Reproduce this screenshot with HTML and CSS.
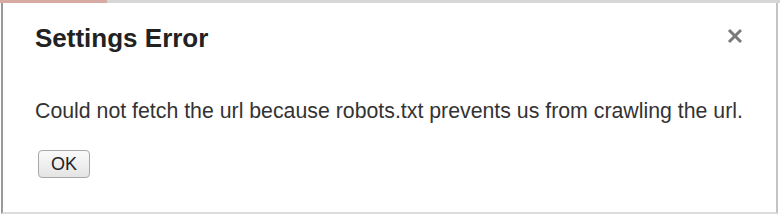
FILE: index.html
```html
<!doctype html>
<html lang="en">
<head>
    <meta charset="UTF-8">
    <title>Settings Error</title>
    <link rel="stylesheet" href="styles.css">
</head>
<body>

<div class="top_strip">
    <div class="top_strip_red"></div>
</div>

<div class="dialog">
    <div class="dialog_head">
        <h2 class="dialog_title">Settings Error</h2>
        <svg class="dialog_close" width="16" height="16" viewBox="0 0 16 16">
            <path d="M2 2 L14 14 M14 2 L2 14" stroke="#7a7a7a" stroke-width="3" stroke-linecap="butt"/>
        </svg>
    </div>
    <p class="dialog_text">Could not fetch the url because robots.txt prevents us from crawling the url.</p>
    <button class="dialog_btn" type="button">OK</button>
</div>

</body>
</html>
```
FILE: styles.css
```css
html, body {
    margin: 0;
    padding: 0;
    background: #fff;
}

body {
    width: 780px;
    height: 216px;
    font-family: "Liberation Sans", Arial, sans-serif;
    color: #2a2a2a;
    overflow: hidden;
}

.top_strip {
    height: 3px;
    background-color: #d6d6d6;
}
.top_strip_red {
    width: 107px;
    height: 3px;
    background-color: #d8aaa4;
}

.dialog {
    height: 211px;
    margin-left: 1px;
    margin-right: 2px;
    border-left: 2px solid #9a9a9a;
    border-right: 2px solid #c4c4c4;
    border-bottom: 2px solid #dcdcdc;
    padding-left: 32px;
    padding-right: 33px;
    box-sizing: border-box;
}

.dialog_head {
    display: flex;
    justify-content: space-between;
    align-items: flex-start;
    padding-top: 20px;
}

.dialog_title {
    margin: 0;
    font-size: 26px;
    font-weight: bold;
    line-height: 30px;
    color: #222;
}

.dialog_close {
    display: block;
    margin-top: 5px;
    cursor: pointer;
}

.dialog_text {
    margin: 46px 0 0 0;
    font-size: 21.3px;
    line-height: 24px;
    color: #333;
}

.dialog_btn {
    display: block;
    margin: 27px 0 0 3px;
    width: 52px;
    height: 28px;
    padding: 0;
    font-family: "Liberation Sans", Arial, sans-serif;
    font-size: 18px;
    color: #222;
    background: linear-gradient(#fafafa, #e4e4e4);
    border: 1px solid #a8a8a8;
    border-radius: 4px;
}
```
